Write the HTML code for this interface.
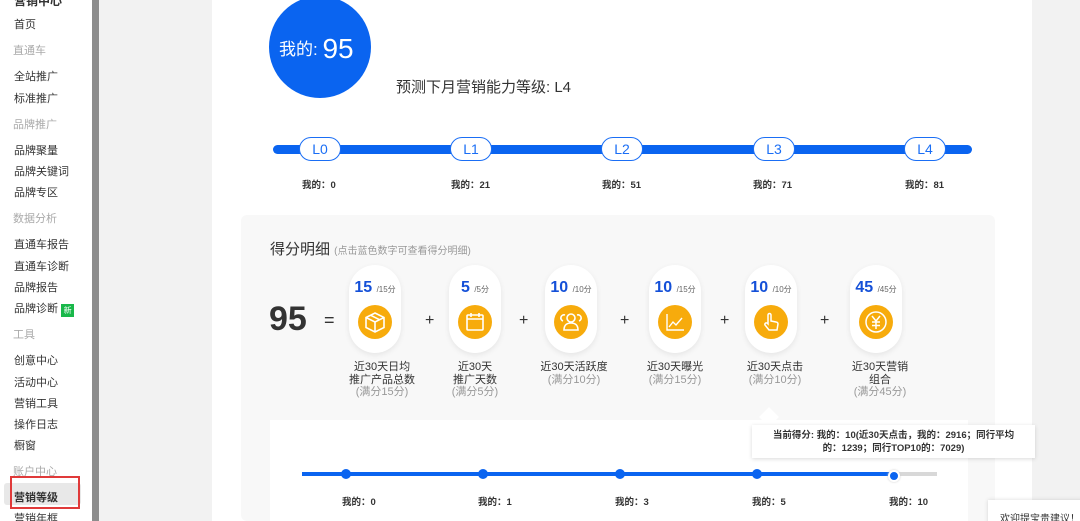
<!DOCTYPE html>
<html><head><meta charset="utf-8"><style>
*{margin:0;padding:0;box-sizing:border-box}
html,body{width:1080px;height:521px;overflow:hidden}
body{background:#f2f2f2;font-family:"Liberation Sans","Noto Sans CJK SC",sans-serif;position:relative;color:#333}
.a{position:absolute}
.side{left:0;top:0;width:92px;height:521px;background:#fff}
.side div{position:absolute;left:14px;font-size:11px;color:#333;white-space:nowrap}
.side .g{color:#aaa;left:13px}
.bar{left:92px;top:0;width:7px;height:521px;background:#8c8c8c}
.main{left:212px;top:0;width:820px;height:521px;background:#fff}
.c{text-align:center;white-space:nowrap}
.lv{width:42px;height:24px;border:1px solid #1a6ef5;border-radius:12px;background:#fff;color:#1a6ef5;font-size:14px;line-height:22px;text-align:center}
.my{font-size:9.5px;font-weight:bold;color:#333;white-space:nowrap}
.pill{width:52px;height:88px;top:265px;background:#fff;border-radius:26px;box-shadow:0 2px 6px rgba(0,0,0,.08)}
.pill .n{position:absolute;top:14px;left:0;width:100%;text-align:center;white-space:nowrap;color:#1450d8;font-weight:bold;font-size:16px}
.pill .n small{font-size:8px;color:#666;font-weight:normal}
.pill .ic{position:absolute;left:9px;top:40px;width:34px;height:34px;border-radius:50%;background:#f7ab0c}
.lab{top:361px;width:120px;font-size:11px;line-height:12.5px;color:#333;text-align:center}
.lab span{color:#999}
.plus{top:312px;font-size:16px;color:#333}
.dot{width:10px;height:10px;border-radius:50%;background:#0a64f0;top:469px}
</style></head><body>
<div class="a side">
<div style="top:-8px;font-weight:bold;font-size:12px">营销中心</div>
<div style="top:16px">首页</div>
<div class="g" style="top:42px">直通车</div>
<div style="top:68px">全站推广</div>
<div style="top:90px">标准推广</div>
<div class="g" style="top:116px">品牌推广</div>
<div style="top:142px">品牌聚量</div>
<div style="top:163px">品牌关键词</div>
<div style="top:184px">品牌专区</div>
<div class="g" style="top:210px">数据分析</div>
<div style="top:236px">直通车报告</div>
<div style="top:258px">直通车诊断</div>
<div style="top:279px">品牌报告</div>
<div style="top:300px">品牌诊断 <span style="display:inline-block;background:#19b84a;color:#fff;font-size:8px;width:13px;height:13px;line-height:13px;text-align:center;vertical-align:-1px">新</span></div>
<div class="g" style="top:326px">工具</div>
<div style="top:352px">创意中心</div>
<div style="top:374px">活动中心</div>
<div style="top:395px">营销工具</div>
<div style="top:416px">操作日志</div>
<div style="top:437px">橱窗</div>
<div class="g" style="top:463px">账户中心</div>
<div style="left:4px;top:483px;width:77px;height:22px;background:#e8e8e8;border-radius:3px"></div>
<div style="top:489px;font-weight:bold">营销等级</div>
<div style="top:510px">营销年框</div>
<div style="left:10px;top:476px;width:70px;height:33px;border:2px solid #e03a3a"></div>
</div>
<div class="a bar"></div>
<div class="a main"></div>
<div class="a" style="left:269px;top:-4px;width:102px;height:102px;border-radius:50%;background:#0a64f0;color:#fff"><span class="a" style="left:10px;top:37px;font-size:17px;white-space:nowrap">我的: <span style="font-size:28px;vertical-align:-3px">95</span></span></div>
<div class="a" style="left:396px;top:76px;font-size:15px;color:#333;white-space:nowrap">预测下月营销能力等级: L4</div>
<div class="a" style="left:273px;top:145px;width:699px;height:9px;border-radius:5px;background:#0a64f0"></div>
<div class="a lv" style="left:299px;top:137px">L0</div>
<div class="a lv" style="left:450px;top:137px">L1</div>
<div class="a lv" style="left:601px;top:137px">L2</div>
<div class="a lv" style="left:753px;top:137px">L3</div>
<div class="a lv" style="left:904px;top:137px">L4</div>
<div class="a my" style="left:302px;top:177px">我的：0</div>
<div class="a my" style="left:451px;top:177px">我的：21</div>
<div class="a my" style="left:602px;top:177px">我的：51</div>
<div class="a my" style="left:753px;top:177px">我的：71</div>
<div class="a my" style="left:905px;top:177px">我的：81</div>
<div class="a" style="left:241px;top:215px;width:754px;height:306px;background:#f8f8f8;border-radius:6px"></div>
<div class="a" style="left:270px;top:238px;font-size:15px;white-space:nowrap">得分明细 <span style="font-size:10px;color:#999">(点击蓝色数字可查看得分明细)</span></div>
<div class="a" style="left:269px;top:300px;font-size:34px;font-weight:bold;color:#333">95</div>
<div class="a" style="left:324px;top:310px;font-size:18px">=</div>
<div class="a pill" style="left:349px"><div class="n">15 <small>/15分</small></div><div class="ic"><svg width="34" height="34" viewBox="0 0 34 34" fill="none" stroke="#fff" stroke-width="1.6"><path d="M17 8l9 4.5v10L17 27l-9-4.5v-10zM8 12.5l9 4.5 9-4.5M17 17v10M12.5 10.2l9 4.5"/></svg></div></div>
<div class="a pill" style="left:449px"><div class="n">5 <small>/5分</small></div><div class="ic"><svg width="34" height="34" viewBox="0 0 34 34" fill="none" stroke="#fff" stroke-width="1.6"><rect x="9" y="10" width="16" height="15" rx="1"/><path d="M9 14h16M13 8v4M21 8v4"/></svg></div></div>
<div class="a pill" style="left:545px"><div class="n">10 <small>/10分</small></div><div class="ic"><svg width="34" height="34" viewBox="0 0 34 34" fill="none" stroke="#fff" stroke-width="1.6"><circle cx="17" cy="13" r="4"/><path d="M10 25c0-5 3-7 7-7s7 2 7 7zM11 10a3 3 0 0 0-2 6M23 10a3 3 0 0 1 2 6"/></svg></div></div>
<div class="a pill" style="left:649px"><div class="n">10 <small>/15分</small></div><div class="ic"><svg width="34" height="34" viewBox="0 0 34 34" fill="none" stroke="#fff" stroke-width="1.4"><path d="M9 9v16h17M11 22l4-5 3 3 6-7"/></svg></div></div>
<div class="a pill" style="left:745px"><div class="n">10 <small>/10分</small></div><div class="ic"><svg width="34" height="34" viewBox="0 0 34 34" fill="none" stroke="#fff" stroke-width="1.5"><path d="M14 19V10a1.5 1.5 0 0 1 3 0v6l5 1a2 2 0 0 1 2 2l-1 6h-8l-4-5a1.5 1.5 0 0 1 2-2z"/></svg></div></div>
<div class="a pill" style="left:850px"><div class="n">45 <small>/45分</small></div><div class="ic"><svg width="34" height="34" viewBox="0 0 34 34" fill="none" stroke="#fff" stroke-width="1.5"><circle cx="17" cy="17" r="10"/><path d="M13 11l4 5 4-5M17 16v8M13 17h8M13 20.5h8"/></svg></div></div>
<div class="a plus" style="left:425px">+</div>
<div class="a plus" style="left:519px">+</div>
<div class="a plus" style="left:620px">+</div>
<div class="a plus" style="left:720px">+</div>
<div class="a plus" style="left:820px">+</div>
<div class="a lab" style="left:322px">近30天日均<br>推广产品总数<br><span>(满分15分)</span></div>
<div class="a lab" style="left:415px">近30天<br>推广天数<br><span>(满分5分)</span></div>
<div class="a lab" style="left:514px">近30天活跃度<br><span>(满分10分)</span></div>
<div class="a lab" style="left:615px">近30天曝光<br><span>(满分15分)</span></div>
<div class="a lab" style="left:715px">近30天点击<br><span>(满分10分)</span></div>
<div class="a lab" style="left:820px">近30天营销<br>组合<br><span>(满分45分)</span></div>
<div class="a" style="left:270px;top:420px;width:698px;height:101px;background:#fff"></div>
<div class="a" style="left:762px;top:410px;width:14px;height:14px;background:#fff;transform:rotate(45deg)"></div>
<div class="a" style="left:302px;top:472px;width:592px;height:4px;background:#0a64f0"></div>
<div class="a" style="left:894px;top:472px;width:43px;height:4px;background:#d8d8d8"></div>
<div class="a dot" style="left:341px"></div>
<div class="a dot" style="left:478px"></div>
<div class="a dot" style="left:615px"></div>
<div class="a dot" style="left:752px"></div>
<div class="a dot" style="left:888px;top:470px;border:2px solid #fff;width:12px;height:12px;box-shadow:0 0 2px #ccc"></div>
<div class="a my" style="left:342px;top:494px">我的：0</div>
<div class="a my" style="left:478px;top:494px">我的：1</div>
<div class="a my" style="left:615px;top:494px">我的：3</div>
<div class="a my" style="left:752px;top:494px">我的：5</div>
<div class="a my" style="left:889px;top:494px">我的：10</div>
<div class="a c" style="left:752px;top:425px;width:283px;height:33px;background:#fff;box-shadow:0 1px 4px rgba(0,0,0,.15);font-size:9.5px;font-weight:bold;line-height:13px;padding-top:4px">当前得分: 我的：10(近30天点击，我的：2916；同行平均<br>的：1239；同行TOP10的：7029)</div>
<div class="a" style="left:988px;top:500px;width:100px;height:30px;background:#fff;box-shadow:0 0 4px rgba(0,0,0,.15);font-size:10px;padding:10px 0 0 12px;white-space:nowrap;color:#333">欢迎提宝贵建议！</div>
</body></html>
